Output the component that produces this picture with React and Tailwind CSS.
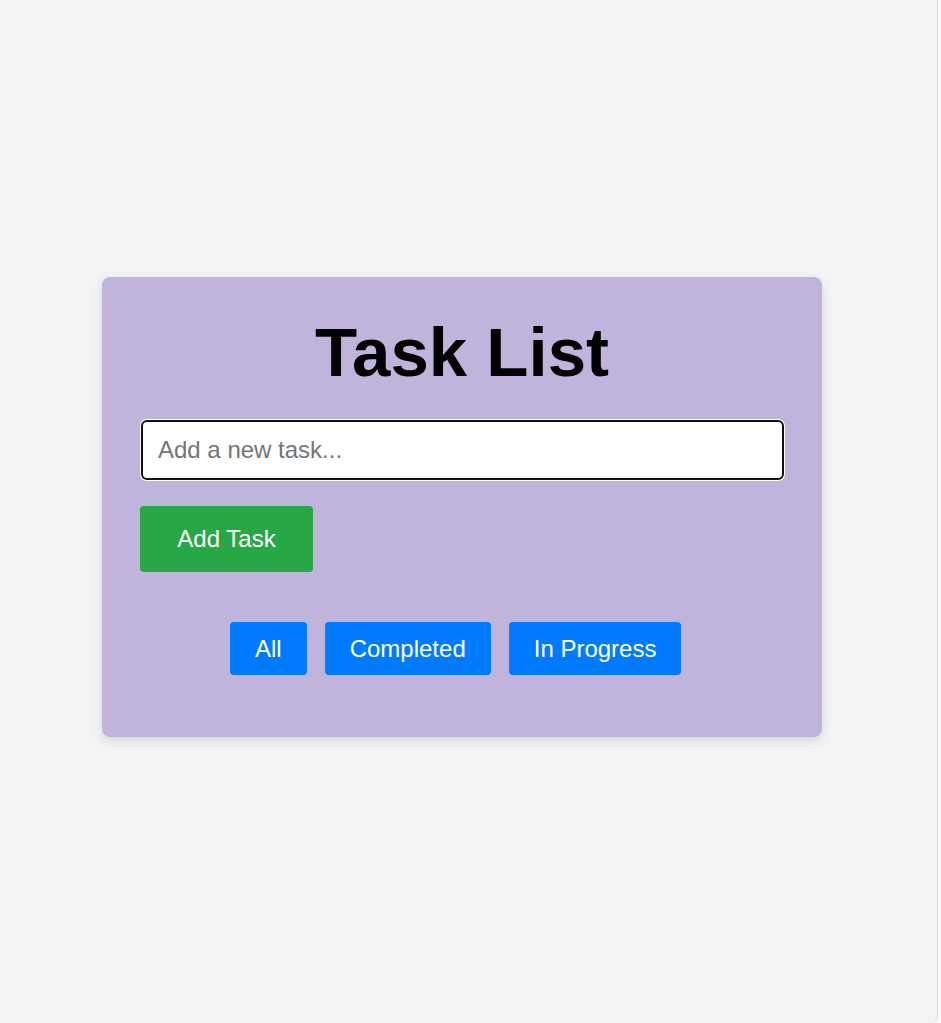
import { useState } from 'react';

const FILTERS = ['All', 'Completed', 'In Progress'];

export default function App() {
  const [task, setTask] = useState('');
  const [filter, setFilter] = useState('All');

  return (
    <div className="min-h-screen bg-[#fafafa]" style={{ fontFamily: '"Liberation Sans", Arial, sans-serif' }}>
      <div className="w-[938px] h-[1023px] bg-[#f4f4f4] border-r border-[#d9d9d9] rounded-br-lg pt-[277px]">
        {/* Card */}
        <div className="ml-[102px] w-[720px] h-[460px] bg-[#c1b4dc] rounded-lg shadow-[0_4px_12px_rgba(0,0,0,0.12)] pt-[36px] pl-[38px] pr-[38px]">
          <h1 className="text-[69px] leading-[79px] font-bold text-black text-center mb-[28px]">Task List</h1>

          <input
            type="text"
            value={task}
            onChange={(e) => setTask(e.target.value)}
            placeholder="Add a new task..."
            autoFocus
            className="block ml-px w-[643px] h-[60px] bg-white border-2 border-[#101010] rounded-md shadow-[0_0_0_1px_#ffffff] px-[15px] text-[24px] text-black placeholder:text-[#757575] focus:outline-none"
          />

          <button
            onClick={() => setTask('')}
            className="mt-[26px] w-[173px] h-[66px] bg-[#28a745] text-white text-[24px] rounded flex items-center justify-center"
          >
            Add Task
          </button>

          {/* Filters */}
          <div className="mt-[50px] flex gap-[18px] pl-[90px]">
            {FILTERS.map((f) => (
              <button
                key={f}
                onClick={() => setFilter(f)}
                className="h-[53px] px-[25px] bg-[#007bff] text-white text-[24px] rounded flex items-center"
              >
                {f}
              </button>
            ))}
          </div>
        </div>
      </div>
    </div>
  );
}
